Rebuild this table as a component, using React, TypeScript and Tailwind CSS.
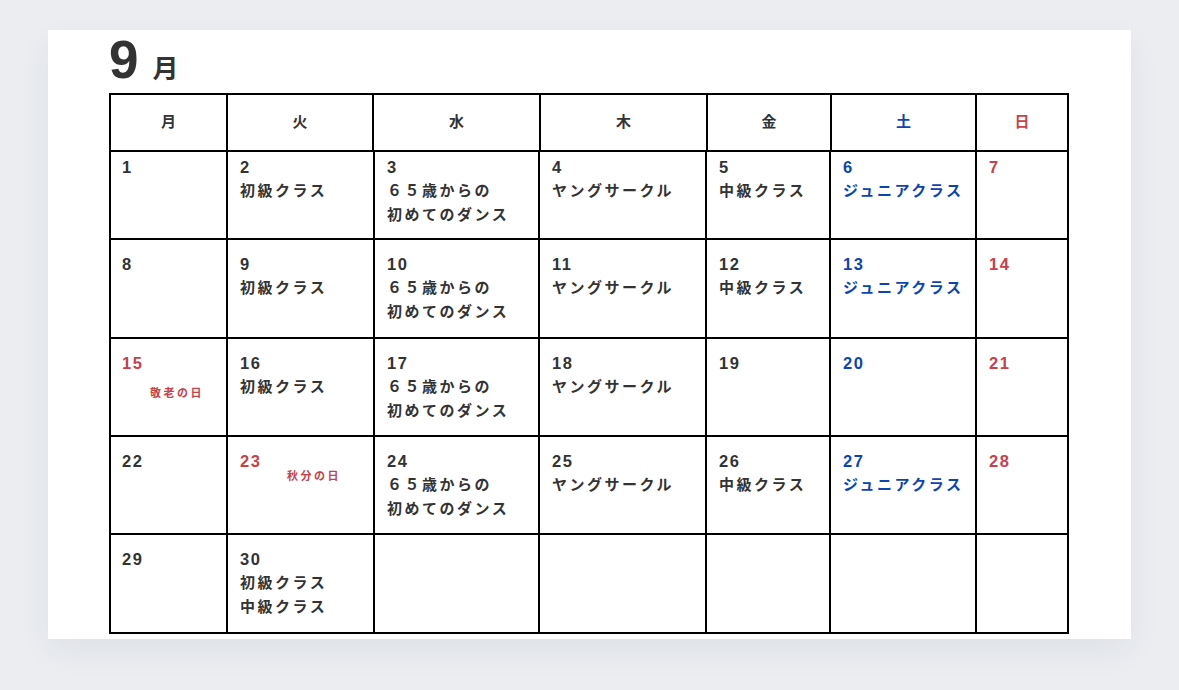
import React from "react";

type Tone = "n" | "b" | "r";
type Cell = { d?: number; tone?: Tone; lines?: string[]; holiday?: { text: string; cls: string } };

const toneCls: Record<Tone, string> = {
  n: "text-[#333333]",
  b: "text-[#0c45b2]",
  r: "text-[#c8404a]",
};

const A = "初級クラス";
const B = ["６５歳からの", "初めてのダンス"];
const C = "ヤングサークル";
const D = "中級クラス";
const E = "ジュニアクラス";

const rows: Cell[][] = [
  [
    { d: 1 },
    { d: 2, lines: [A] },
    { d: 3, lines: B },
    { d: 4, lines: [C] },
    { d: 5, lines: [D] },
    { d: 6, tone: "b", lines: [E] },
    { d: 7, tone: "r" },
  ],
  [
    { d: 8 },
    { d: 9, lines: [A] },
    { d: 10, lines: B },
    { d: 11, lines: [C] },
    { d: 12, lines: [D] },
    { d: 13, tone: "b", lines: [E] },
    { d: 14, tone: "r" },
  ],
  [
    { d: 15, tone: "r", holiday: { text: "敬老の日", cls: "mt-[10px] ml-[28px]" } },
    { d: 16, lines: [A] },
    { d: 17, lines: B },
    { d: 18, lines: [C] },
    { d: 19 },
    { d: 20, tone: "b" },
    { d: 21, tone: "r" },
  ],
  [
    { d: 22 },
    { d: 23, tone: "r", holiday: { text: "秋分の日", cls: "-mt-[5px] ml-[47px]" } },
    { d: 24, lines: B },
    { d: 25, lines: [C] },
    { d: 26, lines: [D] },
    { d: 27, tone: "b", lines: [E] },
    { d: 28, tone: "r" },
  ],
  [{ d: 29 }, { d: 30, lines: [A, D] }, {}, {}, {}, {}, {}],
];

const rowHeights = ["h-[88px]", "h-[99px]", "h-[98px]", "h-[98px]", "h-[99px]"];

const heads: { t: string; tone: Tone }[] = [
  { t: "月", tone: "n" },
  { t: "火", tone: "n" },
  { t: "水", tone: "n" },
  { t: "木", tone: "n" },
  { t: "金", tone: "n" },
  { t: "土", tone: "b" },
  { t: "日", tone: "r" },
];

export default function App() {
  return (
    <div
      className="min-h-[690px] w-full bg-[#ebedf1] pt-[30px] px-[48px]"
      style={{ fontFamily: '"Liberation Sans", "Noto Sans CJK JP", sans-serif' }}
    >
      <div className="h-[609px] w-[1083px] bg-white pl-[61px] pt-[5px] shadow-[0_12px_30px_rgba(40,50,80,0.06)]">
        <div className="flex h-[50px] items-baseline gap-[14px] text-[#333333] font-bold">
          <span className="text-[53px] leading-[50px]">9</span>
          <span className="text-[26px] leading-[26px]" style={{ fontFamily: '"Noto Sans CJK JP", sans-serif' }}>
            月
          </span>
        </div>
        <div className="mt-[8px] w-[960px]">
          <div className="grid h-[59px] grid-cols-[119px_146px_167px_167px_124px_145px_92px]">
            {heads.map((h, i) => (
              <div
                key={h.t}
                className={`flex items-center justify-center border-t-2 border-r-2 border-b-2 border-black text-[15px] font-bold ${
                  i === 0 ? "border-l-2" : ""
                } ${toneCls[h.tone]}`}
              >
                {h.t}
              </div>
            ))}
          </div>
          {rows.map((row, ri) => (
            <div
              key={ri}
              className={`grid grid-cols-[119px_147px_165px_167px_124px_146px_92px] ${rowHeights[ri]}`}
            >
              {row.map((c, ci) => (
                <div
                  key={ci}
                  className={`border-r-2 border-b-2 border-black ${ci === 0 ? "border-l-2 pl-[11px]" : "pl-[12px]"} ${
                    ri === 0 ? "pt-[3px]" : "pt-[12px]"
                  } text-[15px] font-bold leading-[24px] tracking-[2.5px] ${toneCls[c.tone ?? "n"]}`}
                >
                  {c.d !== undefined && <div className="text-[16.5px] tracking-[1.5px]">{c.d}</div>}
                  {c.lines?.map((l) => (
                    <div key={l} className="whitespace-nowrap">
                      {l}
                    </div>
                  ))}
                  {c.holiday && (
                    <div className={`text-[11px] leading-[16px] tracking-[2.5px] ${c.holiday.cls}`}>
                      {c.holiday.text}
                    </div>
                  )}
                </div>
              ))}
            </div>
          ))}
        </div>
      </div>
    </div>
  );
}
